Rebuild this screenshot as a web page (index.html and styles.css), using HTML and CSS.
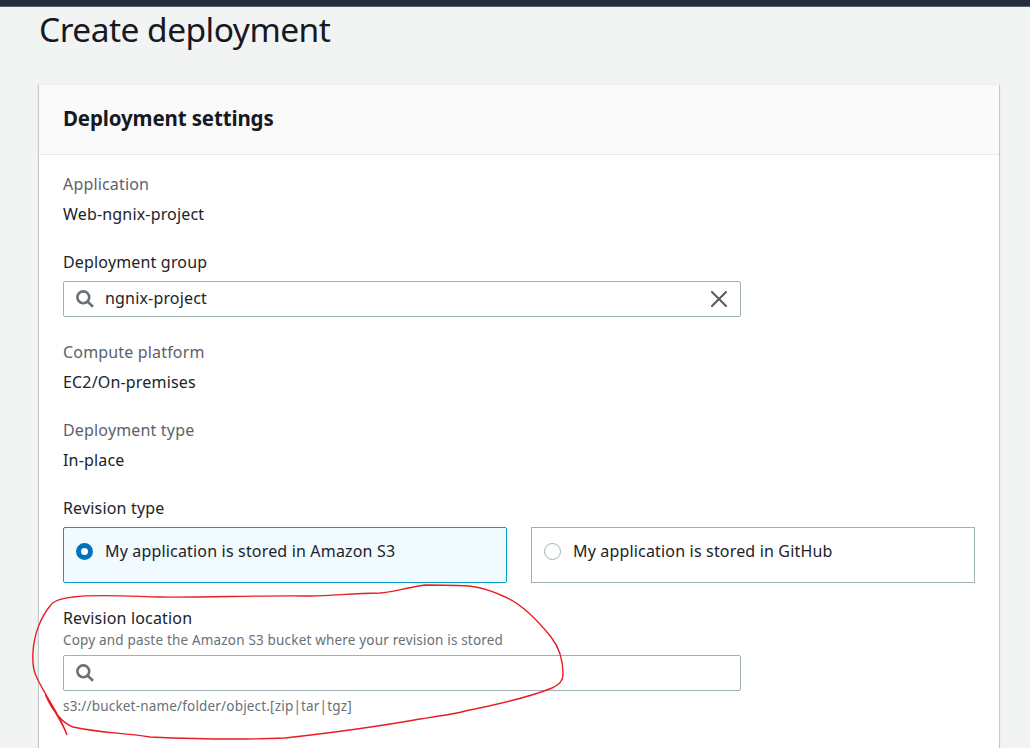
FILE: index.html
```html
<!DOCTYPE html>
<html lang="en">
<head>
<meta charset="utf-8">
<title>Create deployment</title>
<link rel="stylesheet" href="styles.css">
</head>
<body>
<div class="topbar"></div>
<main class="page">
  <h1 class="title">Create deployment</h1>
  <section class="card">
    <header class="card-header"><h2 class="heading">Deployment settings</h2></header>
    <div class="card-body">
      <div class="field">
        <div class="label muted">Application</div>
        <div class="value">Web-ngnix-project</div>
      </div>
      <div class="field group">
        <div class="label">Deployment group</div>
        <div class="input">
          <svg class="icon" viewBox="0 0 18 18"><circle cx="7.3" cy="7.3" r="5.9"/><path d="M11.5 11.5L17 16.8"/></svg>
          <span class="input-text">ngnix-project</span>
          <svg class="close" viewBox="0 0 16 16"><path d="M1 1L15 15M15 1L1 15"/></svg>
        </div>
      </div>
      <div class="field">
        <div class="label muted">Compute platform</div>
        <div class="value">EC2/On-premises</div>
      </div>
      <div class="field">
        <div class="label muted">Deployment type</div>
        <div class="value">In-place</div>
      </div>
      <div class="field revision">
        <div class="label">Revision type</div>
        <div class="tiles">
          <div class="tile selected"><span class="radio"></span><span>My application is stored in Amazon S3</span></div>
          <div class="tile"><span class="radio"></span><span>My application is stored in GitHub</span></div>
        </div>
      </div>
      <div class="field location">
        <div class="label">Revision location</div>
        <div class="hint">Copy and paste the Amazon S3 bucket where your revision is stored</div>
        <div class="input">
          <svg class="icon" viewBox="0 0 18 18"><circle cx="7.3" cy="7.3" r="5.9"/><path d="M11.5 11.5L17 16.8"/></svg>
        </div>
        <div class="hint constraint">s3://bucket-name/folder/object.[zip|tar|tgz]</div>
      </div>
    </div>
  </section>
</main>
<svg class="markup" viewBox="0 0 1030 748"><path d="M67 735C63 724 56 713 49 702C46 696 45 693 46 696C52 710 62 723 73 727C100 733 125 733 150 737C195 739 240 740 285 738C330 733 370 728 420 719C440 716 455 714 465 711C500 704 530 697 552 688C560 684 563 681 563 674C563 660 559 647 551 637C535 617 518 602 503 596C490 590 480 587 469 586C455 585 440 585 425 585C405 588 393 592 380 593C350 593 335 596 310 596C260 595 200 598 160 597C125 596 95 594 73 597C61 599 54 600 50 606C41 617 34 634 33 652C32 671 35 675 45 693C53 707 62 720 67 735"/></svg>
</body>
</html>
```
FILE: styles.css
```css
* { box-sizing: border-box; }
body { margin: 0; width: 1030px; height: 748px; overflow: hidden; background: #f2f3f3; color: #202329; font: 16px/24px "Noto Sans", "Open Sans", sans-serif; letter-spacing: 0.17px; position: relative; }
.topbar { height: 7px; background: #232f3e; border-bottom: 1px solid #5b6370; }
.page { padding: 0 31px 0 39px; }
.title { margin: 0; height: 77px; font-size: 33.5px; line-height: 44px; font-weight: 400; letter-spacing: -0.52px; color: #16191f; }
.card { width: 960px; height: 700px; background: #fff; border-top: 1px solid #eaeded; box-shadow: 0 1px 1px 0 rgba(0, 28, 36, .3), 1px 1px 1px 0 rgba(0, 28, 36, .15), -1px 1px 1px 0 rgba(0, 28, 36, .15); }
.card-header { height: 70px; padding: 20px 24px; background: #fafafa; border-bottom: 1px solid #e7eaea; }
.heading { margin: 0; font-size: 20.5px; line-height: 26px; font-weight: 700; letter-spacing: -0.14px; color: #16191f; }
.card-body { padding: 17px 24px 0; }
.field { margin-bottom: 24px; }
.label + .value { margin-top: 6px; }
.muted { color: #5b626b; }
.input { width: 678px; height: 36px; border: 1px solid #a0b1b2; border-radius: 2px; padding: 0 13px 0 12px; display: flex; align-items: center; gap: 11px; background: #fff; }
.icon { width: 18px; height: 18px; fill: none; stroke: #687078; stroke-width: 2.6; }
.input-text { flex: 1; padding-bottom: 2px; }
.close { width: 16px; height: 16px; fill: none; stroke: #545b64; stroke-width: 2; stroke-linecap: round; }
.group .input, .tiles { margin-top: 7px; }
.group { margin-bottom: 23px; }
.tiles { display: grid; grid-template-columns: 1fr 1fr; gap: 24px; }
.tile { height: 56px; border: 1px solid #a0b1b2; padding: 11px 12px; display: flex; gap: 12px; }
.tile.selected { border-color: #00a1c9; background: #f1faff; border-radius: 2px; }
.radio { width: 17px; height: 17px; margin-top: 4px; border: 1px solid #a0b1b2; border-radius: 50%; background: #fff; }
.selected .radio { border: 5px solid #0073bb; }
.revision { margin-bottom: 23px; }
.hint { font-size: 13.5px; line-height: 20px; color: #687078; letter-spacing: 0.18px; }
.location .input { margin-top: 5px; }
.constraint { margin-top: 5px; }
.markup { position: absolute; left: 0; top: 0; width: 1030px; height: 748px; fill: none; stroke: #e81c23; stroke-width: 1.4; pointer-events: none; }
```
